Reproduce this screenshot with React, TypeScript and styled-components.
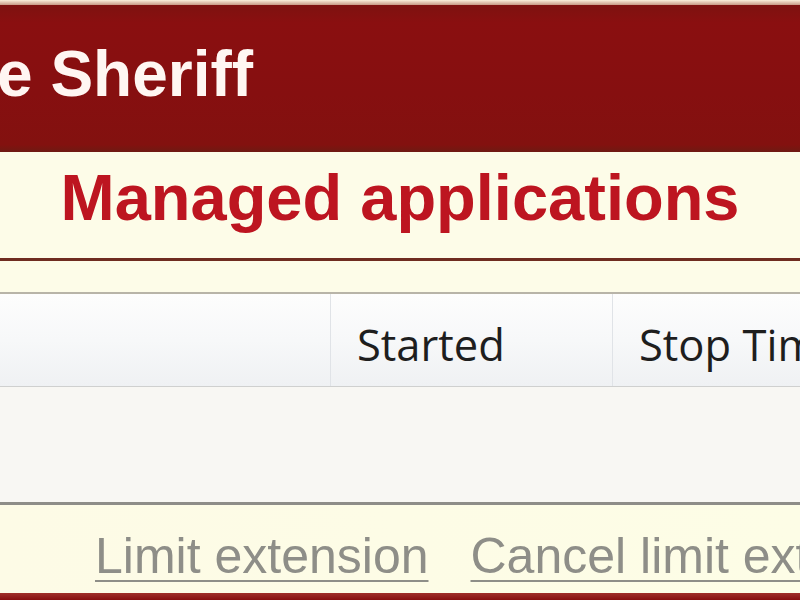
import React from "react";
import styled, { createGlobalStyle } from "styled-components";

const Global = createGlobalStyle`
  html, body { margin: 0; padding: 0; background: #fdfce8; }
  #root { width: 800px; height: 600px; }
`;

const Page = styled.div`
  width: 800px;
  height: 600px;
  overflow: hidden;
  display: flex;
  flex-direction: column;
  background: #fdfce8;
`;

const TopStrip = styled.div`
  height: 5px;
  flex-shrink: 0;
  background: linear-gradient(#fbf0dc, #c89a86);
`;

const Header = styled.header`
  height: 147px;
  flex-shrink: 0;
  box-sizing: border-box;
  padding-top: 37px;
  background: linear-gradient(#7e1210 0%, #8a0f10 12%, #860f10 60%, #83110f 95%, #6e1a12 100%);
  overflow: hidden;
  white-space: nowrap;
`;

const AppTitle = styled.h1`
  margin: 0 0 0 -3px;
  font-family: "Liberation Sans", Arial, sans-serif;
  font-weight: bold;
  font-size: 64px;
  line-height: 1;
  color: #fff6f2;
`;

const TitleBand = styled.div`
  height: 109px;
  flex-shrink: 0;
  box-sizing: border-box;
  padding-top: 13px;
  text-align: center;
  border-bottom: 3px solid #6f2c20;
  background: #fdfce8;
`;

const PageTitle = styled.h2`
  margin: 0;
  font-family: "Liberation Sans", Arial, sans-serif;
  font-weight: bold;
  font-size: 65px;
  line-height: 1;
  color: #bd1520;
`;

const Spacer = styled.div`
  height: 31px;
  flex-shrink: 0;
  background: #fdfce8;
`;

const Table = styled.section`
  flex-shrink: 0;
  border-top: 2px solid #b8b4a8;
  display: flex;
  flex-direction: column;
`;

const HeadRow = styled.div`
  height: 92px;
  display: grid;
  grid-template-columns: 331px 282px 1fr;
  background: linear-gradient(#fdfdfd, #f7f8f9 50%, #eff1f3);
  border-bottom: 1px solid #cfd0cf;
`;

const HeadCell = styled.div<{ $last?: boolean }>`
  box-sizing: border-box;
  padding: 29px 0 0 26px;
  border-right: ${(p) => (p.$last ? "none" : "1px solid #e0e3e7")};
  font-family: "Open Sans", "Noto Sans", sans-serif;
  font-size: 43.5px;
  line-height: 1;
  color: #1e1e1e;
  white-space: nowrap;
  overflow: hidden;
`;

const Body = styled.div`
  height: 115px;
  background: #f8f7f3;
  border-bottom: 3px solid #8e8d88;
`;

const Footer = styled.footer`
  flex: 1;
  display: flex;
  gap: 42px;
  padding: 26px 0 0 95px;
  background: linear-gradient(90deg, #fdfbe6, #fdfde6);
  white-space: nowrap;
  overflow: hidden;
`;

const FooterLink = styled.a`
  font-family: "Liberation Sans", Arial, sans-serif;
  font-size: 50px;
  line-height: 1;
  color: #8e8e88;
  text-decoration: underline;
  text-decoration-thickness: 2px;
  text-underline-offset: 7px;
  cursor: pointer;
`;

const BottomBar = styled.div`
  height: 7px;
  flex-shrink: 0;
  background: linear-gradient(#a0302a, #860f10);
`;

export default function App() {
  return (
    <>
      <Global />
      <Page>
        <TopStrip />
        <Header>
          <AppTitle>e Sheriff</AppTitle>
        </Header>
        <TitleBand>
          <PageTitle>Managed applications</PageTitle>
        </TitleBand>
        <Spacer />
        <Table>
          <HeadRow>
            <HeadCell />
            <HeadCell>Started</HeadCell>
            <HeadCell $last>Stop Time</HeadCell>
          </HeadRow>
          <Body />
        </Table>
        <Footer>
          <FooterLink>Limit extension</FooterLink>
          <FooterLink>Cancel limit extension</FooterLink>
        </Footer>
        <BottomBar />
      </Page>
    </>
  );
}
